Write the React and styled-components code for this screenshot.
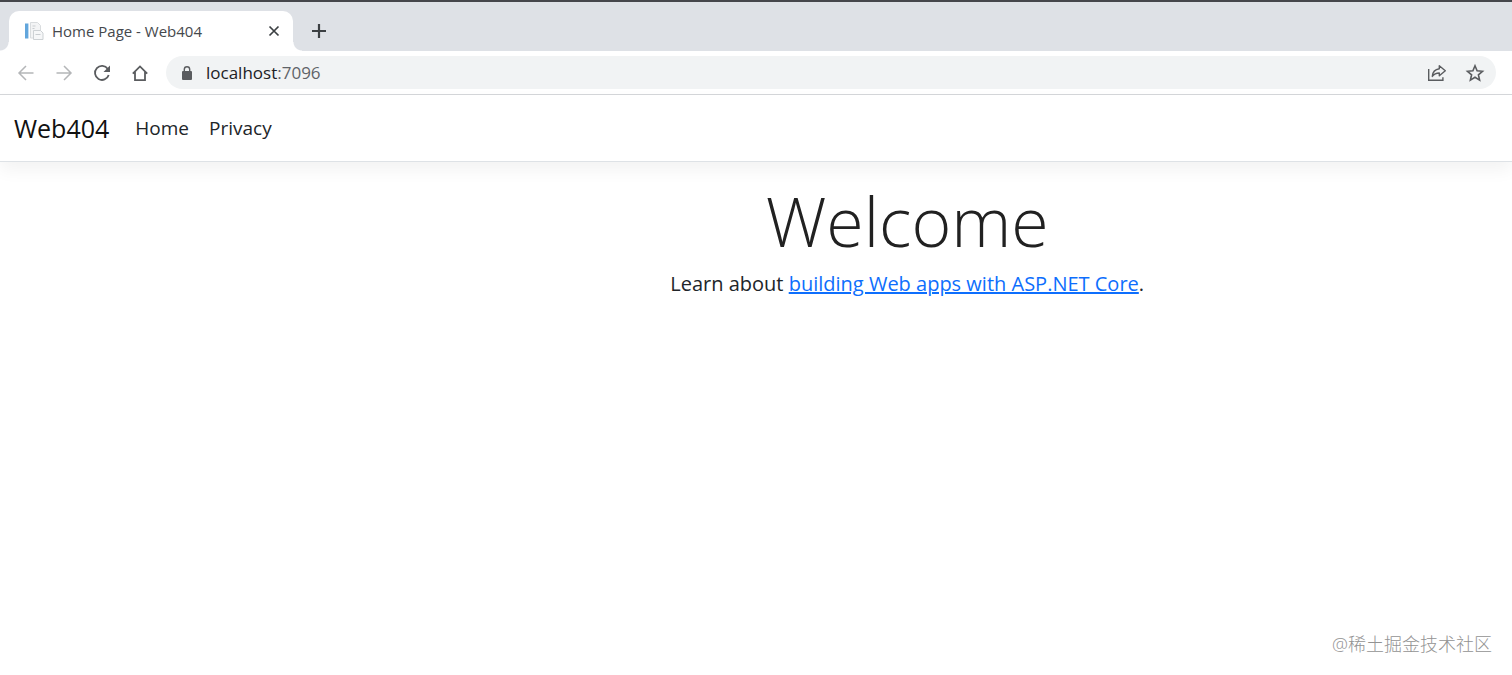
import React from "react";
import styled, { createGlobalStyle } from "styled-components";

const colors = {
  strip: "#dee1e6",
  field: "#f1f3f4",
  icon: "#5a5c5f",
  iconOff: "#b4b6b8",
  text: "#212529",
  link: "#0d6efd",
};

const App = () => {
  return (
    <>
      <GlobalStyle />
      <Browser>
        <TabStrip>
          <Tab>
            <PageIcon />
            <TabTitle>Home Page - Web404</TabTitle>
            <IconButton aria-label="Close tab" $size={18}>
              <svg width="18" height="18" viewBox="0 0 18 18">
                <path
                  d="M4.500 4.500l9 9M13.500 4.500l-9 9"
                  fill="none"
                  stroke="#3c4043"
                  strokeWidth="1.7"
                />
              </svg>
            </IconButton>
          </Tab>
          <IconButton aria-label="New tab" $size={32}>
            <svg width="18" height="18" viewBox="0 0 18 18">
              <path
                d="M9 2v14M2 9h14"
                fill="none"
                stroke="#3c4043"
                strokeWidth="2.2"
              />
            </svg>
          </IconButton>
        </TabStrip>

        <Toolbar>
          <ToolbarButtons>
            <IconButton aria-label="Back" $size={32} $color={colors.iconOff}>
              <Icon>
                <path d="M17.500 10H3.500M10 3L3 10l7 7" />
              </Icon>
            </IconButton>
            <IconButton aria-label="Forward" $size={32} $color={colors.iconOff}>
              <Icon>
                <path d="M2.500 10h14M10 3l7 7-7 7" />
              </Icon>
            </IconButton>
            <IconButton aria-label="Reload" $size={32}>
              <Icon $stroke={1.8}>
                <path d="M15.800 6A7 7 0 1 0 16.700 12" />
                <path d="M18 2.500v6.500h-6.500z" fill="currentColor" stroke="none" />
              </Icon>
            </IconButton>
            <IconButton aria-label="Home" $size={32}>
              <Icon $stroke={1.8}>
                <path d="M2.800 10.600L10 3.400l7.200 7.200M5 9v8.200h10V9" />
              </Icon>
            </IconButton>
          </ToolbarButtons>
          <AddressBar>
            <svg width="12" height="16" viewBox="0 0 12 16">
              <rect x="1" y="6" width="10" height="9" rx="1" fill={colors.icon} />
              <path
                d="M3.300 7V4.400a2.700 2.700 0 0 1 5.400 0V7"
                fill="none"
                stroke={colors.icon}
                strokeWidth="1.4"
              />
            </svg>
            <Address>
              localhost<span>:7096</span>
            </Address>
            <IconButton aria-label="Share this page" $size={20}>
              <Icon $stroke={1.4}>
                <path d="M1.700 6v11.300h14.200v-3" />
                <path
                  d="M12.300 2.800l6 5-6 5V10c-3.200 0-5.200.9-7 3.400.3-4 2.600-7 7-7.600z"
                  strokeLinejoin="round"
                />
              </Icon>
            </IconButton>
            <IconButton aria-label="Bookmark this page" $size={20}>
              <Icon $stroke={1.6}>
                <path d="M10 2.800l2.100 5 5.400.5-4.100 3.500 1.200 5.300L10 14.300l-4.600 2.800 1.200-5.300-4.100-3.500 5.400-.5z" />
              </Icon>
            </IconButton>
          </AddressBar>
        </Toolbar>

        <Navbar>
          <Brand href="#home">Web404</Brand>
          <NavLink href="#home">Home</NavLink>
          <NavLink href="#privacy">Privacy</NavLink>
        </Navbar>

        <Content>
          <Heading>Welcome</Heading>
          <Lead>
            Learn about{" "}
            <a href="#learn">building Web apps with ASP.NET Core</a>.
          </Lead>
        </Content>

        <Watermark>@稀土掘金技术社区</Watermark>
      </Browser>
    </>
  );
};

const Icon = ({ children, $stroke = 1.5 }) => (
  <svg
    width="20"
    height="20"
    viewBox="0 0 20 20"
    fill="none"
    stroke="currentColor"
    strokeWidth={$stroke}
  >
    {children}
  </svg>
);

const PageIcon = () => (
  <svg width="20" height="20" viewBox="0 0 20 20">
    <rect x="1" y="2.500" width="3.400" height="15" fill="#62a6dc" />
    <path d="M6.500 1.500h7l3 3V17h-10z" fill="#f3f4f5" stroke="#d9dcde" />
    <path d="M8.500 5h3M8.500 7.500h2" stroke="#c9cdd0" />
    <path d="M9.500 9.500h7l2.500 2.500v6.500h-9.500z" fill="#f6f7f8" stroke="#cdd1d4" />
    <path d="M11.500 13.500h5" stroke="#c9cdd0" />
  </svg>
);

const GlobalStyle = createGlobalStyle`
  * {
    box-sizing: border-box;
  }

  body {
    margin: 0;
    background-color: #fff;
    color: ${colors.text};
    font-family: "Open Sans", "Noto Sans", "Noto Sans CJK SC", sans-serif;
  }
`;

const Browser = styled.div`
  position: relative;
  min-height: 100vh;
  overflow: hidden;
`;

const TabStrip = styled.div`
  display: flex;
  align-items: flex-end;
  gap: 10px;
  height: 51px;
  padding-left: 9px;
  border-top: 2px solid #45464b;
  background-color: ${colors.strip};

  > button {
    margin-bottom: 4px;
  }
`;

const Tab = styled.div`
  position: relative;
  display: flex;
  align-items: center;
  gap: 8px;
  width: 284px;
  height: 40px;
  padding: 0 10px 0 15px;
  border-radius: 10px 10px 0 0;
  background-color: #fff;

  &::before,
  &::after {
    content: "";
    position: absolute;
    bottom: 0;
    width: 9px;
    height: 9px;
  }

  &::before {
    right: 100%;
    background: radial-gradient(circle at 0 0, transparent 8px, #fff 9px);
  }

  &::after {
    left: 100%;
    background: radial-gradient(circle at 100% 0, transparent 8px, #fff 9px);
  }
`;

const TabTitle = styled.span`
  flex: 1;
  color: #45484c;
  font-size: 15px;
  line-height: 20px;
  white-space: nowrap;
`;

const IconButton = styled.button`
  display: flex;
  flex: none;
  align-items: center;
  justify-content: center;
  width: ${(props) => props.$size}px;
  height: ${(props) => props.$size}px;
  padding: 0;
  border: 0;
  background: none;
  color: ${(props) => props.$color || colors.icon};
`;

const Toolbar = styled.div`
  display: flex;
  align-items: center;
  gap: 10px;
  height: 44px;
  padding: 0 16px 0 10px;
  border-bottom: 1px solid #d5d7da;
`;

const ToolbarButtons = styled.div`
  display: flex;
  gap: 6px;
`;

const AddressBar = styled.div`
  display: flex;
  flex: 1;
  align-items: center;
  gap: 18px;
  height: 33px;
  padding: 0 11px 0 15px;
  border-radius: 17px;
  background-color: ${colors.field};

  > svg {
    margin-right: -5px;
  }
`;

const Address = styled.div`
  flex: 1;
  color: #202124;
  font-size: 17px;
  line-height: 24px;

  span {
    color: #5f6368;
  }
`;

const Navbar = styled.nav`
  display: flex;
  align-items: center;
  gap: 20px;
  height: 67px;
  padding: 0 14px;
  border-bottom: 1px solid #dee2e6;
  box-shadow: 0 8px 16px rgba(0, 0, 0, 0.05);
`;

const Brand = styled.a`
  margin-right: 6px;
  color: #111;
  font-size: 25px;
  line-height: 38px;
  text-decoration: none;
`;

const NavLink = styled.a`
  color: ${colors.text};
  font-size: 19px;
  line-height: 30px;
  text-decoration: none;
`;

/* the page is a fifth wider than the window and runs on past its right edge */
const Content = styled.main`
  width: 120%;
  padding-top: 19px;
  text-align: center;
`;

const Heading = styled.h1`
  margin: 0 0 8px;
  color: #212121;
  font-size: 68px;
  font-weight: 300;
  line-height: 80px;
`;

const Lead = styled.p`
  margin: 0;
  font-size: 20px;
  line-height: 30px;

  a {
    color: ${colors.link};
  }
`;

const Watermark = styled.div`
  position: absolute;
  right: 20px;
  bottom: 17px;
  color: #939393;
  font-size: 18px;
  font-weight: 300;
  line-height: 28px;
`;

export default App;
